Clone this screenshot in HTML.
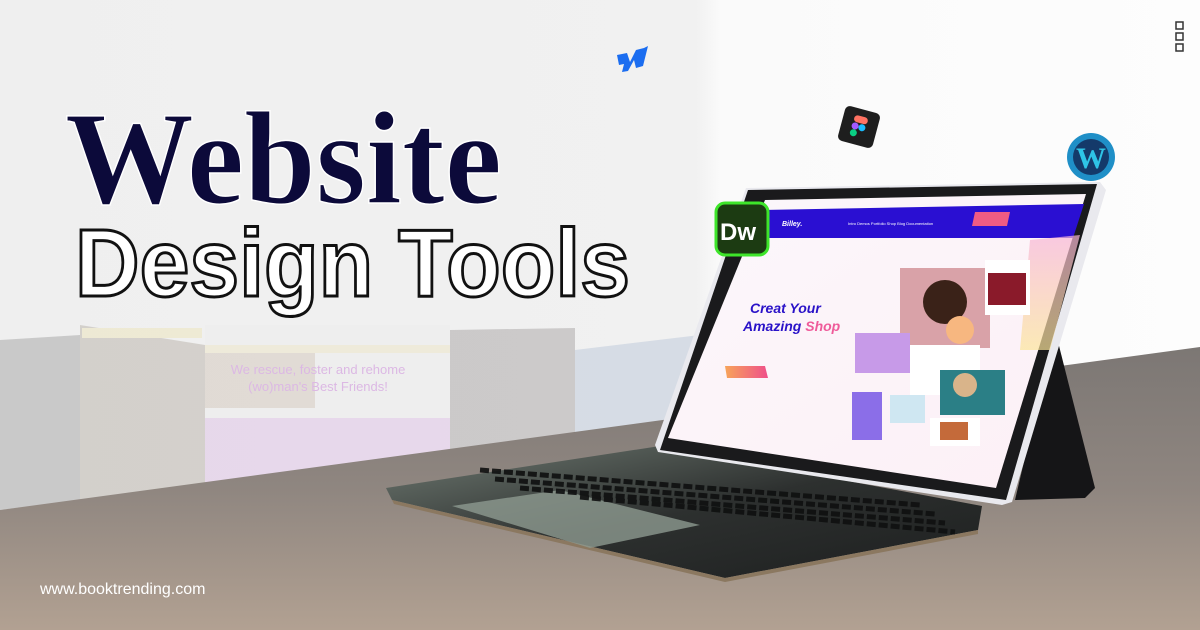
<!DOCTYPE html>
<html><head><meta charset="utf-8"><style>
html,body{margin:0;padding:0;width:1200px;height:630px;overflow:hidden;background:#f2f2f2}
svg{display:block}
</style></head><body>
<svg width="1200" height="630" viewBox="0 0 1200 630" xmlns="http://www.w3.org/2000/svg">
<defs>
<linearGradient id="bgtop" x1="0" x2="1" y1="0" y2="0"><stop offset="0" stop-color="#efefef"/><stop offset="0.58" stop-color="#f1f1f1"/><stop offset="0.6" stop-color="#fafafa"/><stop offset="1" stop-color="#fdfdfd"/></linearGradient>
<linearGradient id="floor" x1="0" x2="0" y1="0" y2="1"><stop offset="0" stop-color="#7c7774"/><stop offset="0.5" stop-color="#8f8680"/><stop offset="1" stop-color="#b2a192"/></linearGradient>
<linearGradient id="scr" x1="0" x2="1" y1="0" y2="1"><stop offset="0" stop-color="#fbf7fb"/><stop offset="1" stop-color="#fdf0f6"/></linearGradient>
<linearGradient id="kb" x1="0" x2="1" y1="0" y2="1"><stop offset="0" stop-color="#6f7a72"/><stop offset="0.5" stop-color="#2d302f"/><stop offset="1" stop-color="#1d1f1f"/></linearGradient>
<linearGradient id="glow" x1="0" x2="0" y1="0" y2="1"><stop offset="0" stop-color="#f7b6d6"/><stop offset="1" stop-color="#fbe59a"/></linearGradient>
<linearGradient id="btn" x1="0" x2="1"><stop offset="0" stop-color="#f7a45a"/><stop offset="1" stop-color="#ef4f8a"/></linearGradient>
</defs>
<rect width="1200" height="630" fill="url(#bgtop)"/>
<!-- faded collage -->
<g opacity="0.18">
<polygon points="0,340 80,335 80,500 0,510" fill="#222"/>
<polygon points="80,325 205,345 205,490 80,500" fill="#5a4a30"/>
<rect x="82" y="328" width="120" height="10" fill="#e8d060"/>
<polygon points="205,325 450,325 450,470 205,490" fill="#e8e8e8"/>
<rect x="205" y="345" width="245" height="8" fill="#e9d27a"/>
<rect x="205" y="353" width="110" height="55" fill="#a08060"/>
<polygon points="205,418 450,418 450,470 205,490" fill="#c070d8"/>
<polygon points="450,330 575,328 575,445 450,470" fill="#2a2020"/>
<polygon points="575,350 700,335 700,410 575,445" fill="#5f80b0"/>
</g>
<text x="318" y="374" font-family="Liberation Sans,sans-serif" font-size="13" fill="#dcb8e4" text-anchor="middle">We rescue, foster and rehome</text>
<text x="318" y="391" font-family="Liberation Sans,sans-serif" font-size="13" fill="#dcb8e4" text-anchor="middle">(wo)man's Best Friends!</text>
<!-- floor -->
<polygon points="0,510 1200,347 1200,630 0,630" fill="url(#floor)"/>
<!-- title -->
<text x="65" y="203" font-family="Liberation Serif,serif" font-weight="bold" font-size="133" textLength="437" lengthAdjust="spacingAndGlyphs" fill="#0c0a3a" stroke="#ffffff" stroke-width="1.5">Website</text>
<text x="75" y="296" font-family="Liberation Sans,sans-serif" font-weight="bold" font-size="96" textLength="555" lengthAdjust="spacingAndGlyphs" fill="#ffffff" stroke="#111" stroke-width="3">Design Tools</text>
<text x="40" y="594" font-family="Liberation Sans,sans-serif" font-size="16" fill="#ffffff">www.booktrending.com</text>
<!-- menu icon -->
<g fill="none" stroke="#333" stroke-width="1.5"><rect x="1176" y="22" width="7" height="7"/><rect x="1176" y="33" width="7" height="7"/><rect x="1176" y="44" width="7" height="7"/></g>
<!-- webflow -->
<path d="M617,55 L627,53 L630,62 L636,50 L644,48 L648,46 L643,66 L636,68 L634,60 L628,71 L622,72 L624,64 L619,65 Z" fill="#1b6df0"/>
<!-- figma -->
<g transform="rotate(15 859 127)"><rect x="841" y="109" width="36" height="36" rx="5" fill="#1e1e1e"/>
<rect x="852" y="116" width="14" height="7" rx="3.5" fill="#ff7262"/><circle cx="855" cy="127" r="3.5" fill="#a259ff"/><circle cx="862" cy="127" r="3.5" fill="#1abcfe"/><circle cx="855" cy="134" r="3.5" fill="#0acf83"/></g>
<!-- stand -->
<polygon points="1055,330 1095,488 1085,498 1015,500" fill="#151517"/>
<!-- keyboard -->
<polygon points="386,488 660,446 982,506 978,530 725,578 392,500" fill="url(#kb)"/>
<polygon points="392,500 725,578 978,530 978,534 725,582 394,504" fill="#8b7860"/>
<polygon points="452,506 560,490 700,525 590,548" fill="#8d9a90" opacity="0.8"/>
<g stroke="#0f1010" stroke-width="5" stroke-dasharray="9 3" opacity="0.9">
<line x1="480" y1="470" x2="920" y2="505" transform="rotate(0)"/>
<line x1="495" y1="479" x2="935" y2="514"/>
<line x1="520" y1="488" x2="945" y2="523"/>
<line x1="580" y1="497" x2="955" y2="532"/>
</g>
<!-- tablet -->
<polygon points="746,188 1100,182 1106,190 1012,502 1002,505 658,452 655,445" fill="#e9e9ee"/>
<polygon points="748,190 1097,184 1006,500 660,450" fill="#1a1a1c"/>
<polygon points="765,200 1086,194 996,488 668,438" fill="url(#scr)"/>
<polygon points="762,210 1084,204 1073,238 752,238" fill="#2a0fd2"/>
<polygon points="975,212 1010,212 1007,226 972,226" fill="#ef5b84"/>
<text x="782" y="226" font-family="Liberation Sans,sans-serif" font-size="7" font-style="italic" fill="#fff" font-weight="bold">Billey.</text>
<text x="848" y="225" font-family="Liberation Sans,sans-serif" font-size="4" fill="#fff">Intro   Demos   Portfolio   Shop   Blog   Documentation</text>
<polygon points="1030,240 1080,235 1050,350 1020,350" fill="url(#glow)" opacity="0.7"/>
<text x="750" y="313" font-family="Liberation Sans,sans-serif" font-style="italic" font-weight="bold" font-size="14" fill="#2a12c8">Creat Your</text>
<text x="743" y="331" font-family="Liberation Sans,sans-serif" font-style="italic" font-weight="bold" font-size="14" fill="#2a12c8">Amazing <tspan fill="#ef5b9a">Shop</tspan></text>
<polygon points="725,366 765,366 768,378 727,378" fill="url(#btn)"/>
<rect x="900" y="268" width="90" height="80" fill="#d9a2a8"/>
<circle cx="945" cy="302" r="22" fill="#3a2218"/>
<circle cx="960" cy="330" r="14" fill="#f7b780"/>
<rect x="985" y="260" width="45" height="55" fill="#fff"/>
<rect x="988" y="273" width="38" height="32" fill="#8a1a2a"/>
<rect x="855" y="333" width="55" height="40" fill="#c79ae8"/>
<rect x="910" y="345" width="70" height="50" fill="#fff"/>
<rect x="940" y="370" width="65" height="45" fill="#2b7f86"/>
<circle cx="965" cy="385" r="12" fill="#d9b48a"/>
<rect x="930" y="418" width="50" height="28" fill="#fff"/>
<rect x="940" y="422" width="28" height="18" fill="#c46a3a"/>
<rect x="852" y="392" width="30" height="48" fill="#8b6ee8"/>
<rect x="890" y="395" width="35" height="28" fill="#cfe7f2"/>
<!-- Dw -->
<rect x="716" y="203" width="52" height="52" rx="9" fill="#1c3b12" stroke="#3ee52a" stroke-width="3"/>
<text x="720" y="240" font-family="Liberation Sans,sans-serif" font-weight="bold" font-size="24" fill="#fff">Dw</text>
<!-- wordpress -->
<circle cx="1091" cy="157" r="24" fill="#1f8fc7"/>
<circle cx="1091" cy="157" r="18" fill="#143a6a"/>
<text x="1091" y="168" font-family="Liberation Serif,serif" font-weight="bold" font-size="30" fill="#2ec4e6" text-anchor="middle">W</text>
</svg>
</body></html>
